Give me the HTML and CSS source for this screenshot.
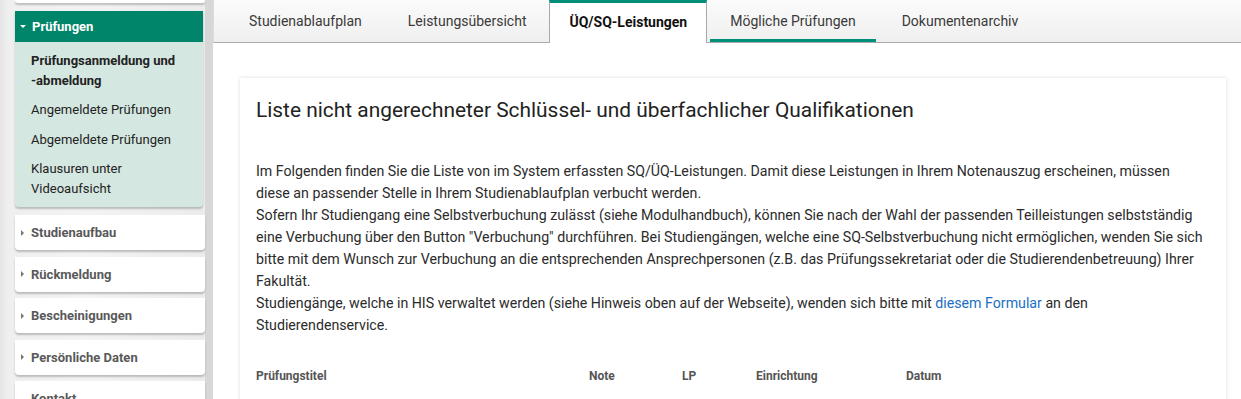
FILE: index.html
```
<!DOCTYPE html>
<html lang="de">
<head>
	<meta charset="UTF-8">
	<title>ÜQ/SQ-Leistungen</title>
	<link rel="stylesheet" href="styles.css">
</head>
<body>
	<div class="page">
		<div class="sidebar">
			<div class="navbox navtop"></div>
			<div class="navbox open">
				<div class="navhead"><span class="caret down"></span>Prüfungen</div>
				<ul class="subnav">
					<li class="current">Prüfungsanmeldung und <span class="nobr">-abmeldung</span></li>
					<li>Angemeldete Prüfungen</li>
					<li>Abgemeldete Prüfungen</li>
					<li>Klausuren unter Videoaufsicht</li>
				</ul>
			</div>
			<div class="navbox"><div class="navhead"><span class="caret"></span>Studienaufbau</div></div>
			<div class="navbox"><div class="navhead"><span class="caret"></span>Rückmeldung</div></div>
			<div class="navbox"><div class="navhead"><span class="caret"></span>Bescheinigungen</div></div>
			<div class="navbox"><div class="navhead"><span class="caret"></span>Persönliche Daten</div></div>
			<div class="navbox"><div class="navhead nocaret">Kontakt</div></div>
		</div>
		<div class="main">
			<ul class="tabs">
				<li>Studienablaufplan</li>
				<li>Leistungsübersicht</li>
				<li class="active">ÜQ/SQ-Leistungen</li>
				<li class="hover">Mögliche Prüfungen</li>
				<li>Dokumentenarchiv</li>
			</ul>
			<div class="card">
				<h1>Liste nicht angerechneter Schlüssel- und überfachlicher Qualifikationen</h1>
				<p>Im Folgenden finden Sie die Liste von im System erfassten SQ/ÜQ-Leistungen. Damit diese Leistungen in Ihrem Notenauszug erscheinen, müssen<br>
				diese an passender Stelle in Ihrem Studienablaufplan verbucht werden.<br>
				Sofern Ihr Studiengang eine Selbstverbuchung zulässt (siehe Modulhandbuch), können Sie nach der Wahl der passenden Teilleistungen selbstständig<br>
				eine Verbuchung über den Button "Verbuchung" durchführen. Bei Studiengängen, welche eine SQ-Selbstverbuchung nicht ermöglichen, wenden Sie sich<br>
				bitte mit dem Wunsch zur Verbuchung an die entsprechenden Ansprechpersonen (z.B. das Prüfungssekretariat oder die Studierendenbetreuung) Ihrer<br>
				Fakultät.<br>
				Studiengänge, welche in HIS verwaltet werden (siehe Hinweis oben auf der Webseite), wenden sich bitte mit <a href="#">diesem Formular</a> an den<br>
				Studierendenservice.</p>
				<div class="thead">
					<span class="c-title">Prüfungstitel</span>
					<span class="c-note">Note</span>
					<span class="c-lp">LP</span>
					<span class="c-einr">Einrichtung</span>
					<span class="c-datum">Datum</span>
				</div>
			</div>
		</div>
	</div>
</body>
</html>
```
FILE: styles.css
```
*{margin:0; padding:0; box-sizing:border-box;}
html, body{height:100%; overflow:hidden;}
body{font-family:Roboto, "Liberation Sans", sans-serif; font-size:14px; color:#333; background:#fff;}
ul{list-style:none;}

.page{display:flex; height:100%;}

/* linke Navigation */
.sidebar{width:213px; flex:none; padding-left:15px; padding-right:8px;
	background:linear-gradient(to right, #e4e4e4 0, #efefef 8px, #f3f3f3 40%, #ebebeb 100%);
	box-shadow:inset -8px 0 0 #d7d7d7;}
.navbox{background:#fff; border-radius:0 0 4px 4px; box-shadow:0 2px 2px rgba(0,0,0,.22); margin-top:6.5px;}
.navtop{height:3px; margin-top:0;}
.navbox.open{margin-top:8px; background:#d5e7e1; border-radius:0 0 4px 4px; margin-right:2px;}
.navbox.open + .navbox{margin-top:8px;}
.navhead{height:35px; display:flex; align-items:center; padding-left:6px; font-weight:bold; color:#595959; font-size:13px;}
.navhead.nocaret{padding-left:16px;}
.open .navhead{height:31px; background:#00856a; color:#fff;}
.caret{width:0; height:0; border-top:3.5px solid transparent; border-bottom:3.5px solid transparent; border-left:3.5px solid #777; margin-right:7px;}
.caret.down{border-left:3.5px solid transparent; border-right:3.5px solid transparent; border-top:3.5px solid #fff; border-bottom:0; margin-left:-1px; margin-right:6px;}
.subnav{padding:4px 10px 4px 16px;}
.subnav li{line-height:19.5px; padding:5px 0; font-size:13px; color:#222;}
.subnav li.current{font-weight:bold;}
.nobr{white-space:nowrap;}

/* Hauptbereich */
.main{flex:1; min-width:0;}
.tabs{display:flex; height:43px; padding-left:12px; border-bottom:1px solid #ababab; border-left:1px solid #dcdcdc;
	background:linear-gradient(#fbfbfb, #efefef);}
.tabs li{padding:0 22px; border:1px solid transparent; border-bottom:0; line-height:41px; color:#3a3a3a; white-space:nowrap; position:relative;}
.tabs li.active{background:#fff; border-color:#a8a8a8; border-top:3px solid #00907a; line-height:39px; height:43px; padding:0 19px; font-weight:bold; color:#111;}
.tabs li.hover::after{content:""; position:absolute; left:2px; right:2px; bottom:0; height:3px; background:#00907a;}

.card{margin:35px 15px 0 27px; padding:16px 12px 0 16px; background:#fff; box-shadow:0 0 4px rgba(0,0,0,.14); height:400px;}
.card h1{font-size:20.9px; font-weight:normal; color:#222; line-height:32px;}
.card p{margin-top:34px; line-height:22px; color:#2b2b2b; font-size:14.2px; white-space:nowrap;}
.card a{color:#1a6fc4; text-decoration:none;}
.thead{display:flex; margin-top:30px; font-size:12px; font-weight:bold; color:#555; line-height:20px;}
.thead span{flex:none;}
.c-title{width:333px;}
.c-note{width:93px;}
.c-lp{width:74px;}
.c-einr{width:150px;}
```
